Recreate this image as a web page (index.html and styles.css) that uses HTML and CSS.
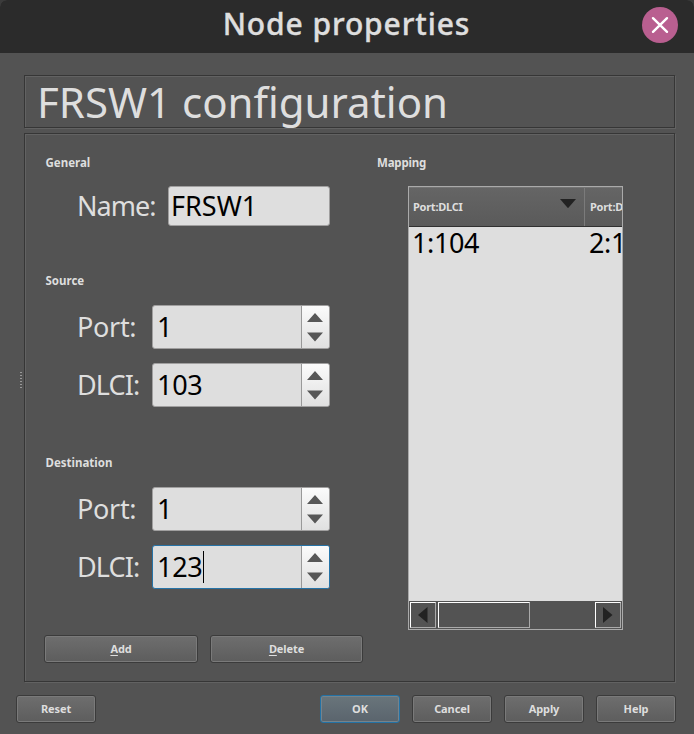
FILE: index.html
```html
<!DOCTYPE html>
<html lang="en">
<head>
<meta charset="utf-8">
<title>Node properties</title>
<link rel="stylesheet" href="styles.css">
</head>
<body>
<div class="dialog">
  <header class="titlebar">
    <h1 class="title">Node properties</h1>
    <button class="close" aria-label="Close"><svg width="36" height="36" viewBox="0 0 36 36"><path d="M11 11.2 25 24.8M25 11.2 11 24.8" stroke="#fff" stroke-width="2.4" stroke-linecap="round"/></svg></button>
  </header>
  <main class="content">
    <div class="splitter"></div>
    <div class="page">
      <div class="frame heading"><span>FRSW1 configuration</span></div>
      <div class="frame panel">
        <div class="left">
          <section class="group general">
            <h2>General</h2>
            <div class="row name"><label>Name:</label><div class="field input"><span>FRSW1</span></div></div>
          </section>
          <section class="group source">
            <h2>Source</h2>
            <div class="row"><label>Port:</label><div class="field spin"><span class="value">1</span><svg class="steps" width="27" height="42" viewBox="0 0 27 42"><path d="M5 16 13 7l8 9zM5 26.5h16l-8 9z"/></svg></div></div>
            <div class="row"><label class="dlci">DLCI:</label><div class="field spin"><span class="value">103</span><svg class="steps" width="27" height="42" viewBox="0 0 27 42"><path d="M5 16 13 7l8 9zM5 26.5h16l-8 9z"/></svg></div></div>
          </section>
          <section class="group destination">
            <h2>Destination</h2>
            <div class="row"><label>Port:</label><div class="field spin"><span class="value">1</span><svg class="steps" width="27" height="42" viewBox="0 0 27 42"><path d="M5 16 13 7l8 9zM5 26.5h16l-8 9z"/></svg></div></div>
            <div class="row"><label class="dlci">DLCI:</label><div class="field spin focus"><span class="value">123</span><i class="caret"></i><svg class="steps" width="27" height="42" viewBox="0 0 27 42"><path d="M5 16 13 7l8 9zM5 26.5h16l-8 9z"/></svg></div></div>
          </section>
          <div class="actions">
            <button class="btn"><span><u>A</u>dd</span></button>
            <button class="btn"><span><u>D</u>elete</span></button>
          </div>
        </div>
        <section class="right">
          <h2>Mapping</h2>
          <div class="table">
            <div class="thead">
              <div class="th first"><span>Port:DLCI</span><svg width="16" height="10" viewBox="0 0 16 10"><path d="M0 0h16L8 9.3z" fill="#222"/></svg></div>
              <div class="th"><span>Port:DLCI</span></div>
            </div>
            <div class="tbody"><div class="td first">1:104</div><div class="td">2:104</div></div>
            <div class="scroll">
              <div class="bevel arrow"><svg width="10" height="16" viewBox="0 0 10 16"><path d="M0 8 9.5 0v16z" fill="#222"/></svg></div>
              <div class="bevel thumb"></div>
              <div class="bevel arrow next"><svg width="10" height="16" viewBox="0 0 10 16"><path d="M9.5 8 0 0v16z" fill="#222"/></svg></div>
            </div>
          </div>
        </section>
      </div>
    </div>
  </main>
  <footer class="footer">
    <button class="btn reset"><span>Reset</span></button>
    <button class="btn ok"><span>OK</span></button>
    <button class="btn"><span>Cancel</span></button>
    <button class="btn"><span>Apply</span></button>
    <button class="btn"><span>Help</span></button>
  </footer>
</div>
</body>
</html>
```
FILE: styles.css
```css
* { box-sizing: border-box; }
body { margin: 0; background: #3b3b3b; font-family: "Noto Sans", "Open Sans", sans-serif; color: #dedede; }
h1, h2 { margin: 0; }
button { font: inherit; color: inherit; padding: 0; }
svg { display: block; }

.dialog { width: 694px; height: 734px; display: flex; flex-direction: column; background: #535353; border-radius: 7px 7px 0 0; overflow: hidden; }

.titlebar { height: 53px; flex: none; background: #2b2b2b; display: grid; grid-template-columns: 52px 1fr 52px; padding-bottom: 5px; }
.title { grid-column: 2; text-align: center; font-size: 30px; line-height: 48px; font-weight: 500; letter-spacing: 0.9px; white-space: nowrap; -webkit-text-stroke: 0.4px #dedede; margin-left: -1px; }
.close { width: 36px; height: 36px; margin-top: 7px; border: 0; border-radius: 50%; background: #b95f90; }

.content { display: flex; padding: 22px 19px 0 19px; height: 629px; flex: none; }
.splitter { width: 5px; height: 17px; margin-top: 297px; background: repeating-linear-gradient(#999 0 1px, transparent 1px 3px) 1px 0 / 2px 100% no-repeat; }
.page { width: 651px; display: flex; flex-direction: column; gap: 5px; }
.frame { border: 1px solid #363636; box-shadow: 1px 1px 0 #626262, inset 1px 1px 0 #626262; }
.heading { height: 53px; padding-left: 12px; font-size: 42px; line-height: 51px; letter-spacing: 0; white-space: nowrap; }
.panel { height: 549px; display: flex; padding: 18px 0 0 19px; }

.left { width: 333px; display: flex; flex-direction: column; }
h2 { font-size: 11.5px; line-height: 22px; height: 20px; font-weight: 700; padding-left: 1.5px; }
.group { display: flex; flex-direction: column; }
.general { height: 118px; gap: 14px; }
.source, .destination { gap: 14px; }
.source { height: 182px; }
.destination { height: 183px; }
.source h2, .destination h2 { margin-bottom: 1px; }
.row { display: grid; grid-template-columns: 75px 178px; padding-left: 33px; font-size: 27px; line-height: 42px; }
.row.name { grid-template-columns: 91px 162px; line-height: 38px; }
.row label { white-space: nowrap; line-height: 44px; letter-spacing: -0.3px; }
.row.name label { line-height: 40px; letter-spacing: -1px; }
.row .dlci { letter-spacing: -0.9px; }
.field { display: flex; border: 1px solid #a09f9f; border-radius: 3px; background: #dedede; color: #000; overflow: hidden; }
.input { height: 40px; padding-left: 2px; }
.spin { height: 44px; padding-left: 4px; }
.value { letter-spacing: -0.3px; }
.steps { margin-left: auto; border-left: 1px solid #999; box-sizing: content-box; background: linear-gradient(#fbfbfb, #e0e0e0); fill: #575757; flex: none; }
.focus { border-color: #2673a7; }
.caret { width: 1px; height: 32px; margin: 5px 0 0 1px; background: #000; }
.actions { display: grid; grid-template-columns: 154px 153px; gap: 12px; }

.btn { height: 28px; border: 1px solid #3b3b3b; border-radius: 3px; background: linear-gradient(#6e6e6e, #5d5d5d); box-shadow: inset 0 0 0 1px #7a7a7a; font-size: 11px; font-weight: 700; line-height: 26px; letter-spacing: -0.1px; }
.btn u { text-underline-offset: 2px; }
.ok { border-color: #2372a5; background: linear-gradient(#69757b, #5a646d); box-shadow: inset 0 0 0 1px #75838b; }

.right { width: 247px; }
.right h2 { padding: 0; letter-spacing: -0.2px; }
.table { width: 215px; height: 444px; margin: 14px 0 0 31px; border: 1px solid #aaa; background: #dedede; display: flex; flex-direction: column; overflow: hidden; }
.thead { height: 40px; display: flex; background: linear-gradient(#656565, #5a5a5a); border-bottom: 1px solid #303030; border-top: 1px solid #747474; }
.th { display: flex; flex: none; width: 176px; padding-left: 5px; font-size: 11px; line-height: 38px; font-weight: 700; letter-spacing: -0.25px; white-space: nowrap; }
.th.first { border-right: 1px solid #7b7b7b; padding-left: 4px; }
.th svg { margin: 11px 8px 0 auto; }
.tbody { flex: 1; display: flex; font-size: 27px; line-height: 32px; letter-spacing: -0.4px; color: #000; }
.td { flex: none; width: 176px; padding-left: 4px; }
.td.first { padding-left: 3px; }
.scroll { height: 28px; background: #535353; display: flex; padding: 1px; gap: 2px; }
.bevel { height: 26px; border: 1px solid; border-color: #fff #aaa #aaa #fff; }
.arrow { width: 26px; display: flex; align-items: center; justify-content: center; }
.thumb { width: 92px; }
.next { margin-left: auto; }

.footer { display: flex; gap: 12px; padding: 13px 18px 0 16px; }
.footer .btn { width: 80px; }
.footer .reset { margin-right: auto; }
```
